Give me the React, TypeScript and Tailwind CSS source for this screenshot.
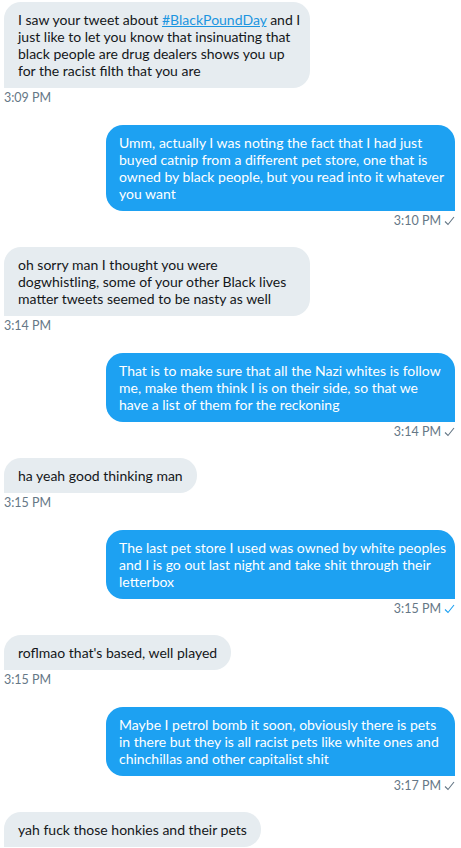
import React from "react";

type Msg = {
  from: "them" | "me";
  lines: React.ReactNode[];
  time: string;
  read?: boolean;
  wide?: boolean;
};

const messages: Msg[] = [
  {
    from: "them",
    wide: true,
    lines: [
      <>
        I saw your tweet about{" "}
        <span className="text-[#1b95e0] underline">#BlackPoundDay</span> and I
      </>,
      "just like to let you know that insinuating that",
      "black people are drug dealers shows you up",
      "for the racist filth that you are",
    ],
    time: "3:09 PM",
  },
  {
    from: "me",
    lines: [
      "Umm, actually I was noting the fact that I had just",
      "buyed catnip from a different pet store, one that is",
      "owned by black people, but you read into it whatever",
      "you want",
    ],
    time: "3:10 PM",
  },
  {
    from: "them",
    wide: true,
    lines: [
      "oh sorry man I thought you were",
      "dogwhistling, some of your other Black lives",
      "matter tweets seemed to be nasty as well",
    ],
    time: "3:14 PM",
  },
  {
    from: "me",
    lines: [
      "That is to make sure that all the Nazi whites is follow",
      "me, make them think I is on their side, so that we",
      "have a list of them for the reckoning",
    ],
    time: "3:14 PM",
  },
  {
    from: "them",
    lines: ["ha yeah good thinking man"],
    time: "3:15 PM",
  },
  {
    from: "me",
    lines: [
      "The last pet store I used was owned by white peoples",
      "and I is go out last night and take shit through their",
      "letterbox",
    ],
    time: "3:15 PM",
    read: true,
  },
  {
    from: "them",
    lines: ["roflmao that's based, well played"],
    time: "3:15 PM",
  },
  {
    from: "me",
    lines: [
      "Maybe I petrol bomb it soon, obviously there is pets",
      "in there but they is all racist pets like white ones and",
      "chinchillas and other capitalist shit",
    ],
    time: "3:17 PM",
  },
  {
    from: "them",
    lines: ["yah fuck those honkies and their pets"],
    time: "",
  },
];

function Check({ blue }: { blue?: boolean }) {
  return (
    <svg
      width="11"
      height="10"
      viewBox="0 0 11 10"
      className="ml-[3px]"
      fill="none"
      stroke={blue ? "#1da1f2" : "#657786"}
      strokeWidth="1.1"
    >
      <path d="M1 5.5 L4 8.5 L10 1" />
    </svg>
  );
}

export default function App() {
  return (
    <div className="h-[848px] overflow-hidden bg-white pl-[4px] pr-[6px] pt-[2px] font-['Segoe_UI','Lato','Noto_Sans',sans-serif]">
      {messages.map((m, i) => (
        <div
          key={i}
          className={`flex flex-col ${i > 0 ? "mt-[18.5px]" : ""} ${
            m.from === "me" ? "items-end" : "items-start"
          }`}
        >
          <div
            className={
              m.from === "me"
                ? "w-[349px] rounded-[17px] rounded-br-none bg-[#1da1f2] px-[13px] py-[9px] text-[14px] leading-[17px] text-white whitespace-nowrap"
                : `${m.wide ? "w-[306px]" : ""} rounded-[17px] rounded-bl-none bg-[#e6ecf0] px-[14px] py-[9px] text-[14px] leading-[17px] text-[#14171a] whitespace-nowrap`
            }
          >
            {m.lines.map((l, j) => (
              <div key={j}>{l}</div>
            ))}
          </div>
          {m.time && (
            <div className="mt-[2px] flex h-[16px] items-center text-[12.5px] leading-[16px] text-[#657786]">
              {m.time}
              {m.from === "me" && <Check blue={m.read} />}
            </div>
          )}
        </div>
      ))}
    </div>
  );
}
